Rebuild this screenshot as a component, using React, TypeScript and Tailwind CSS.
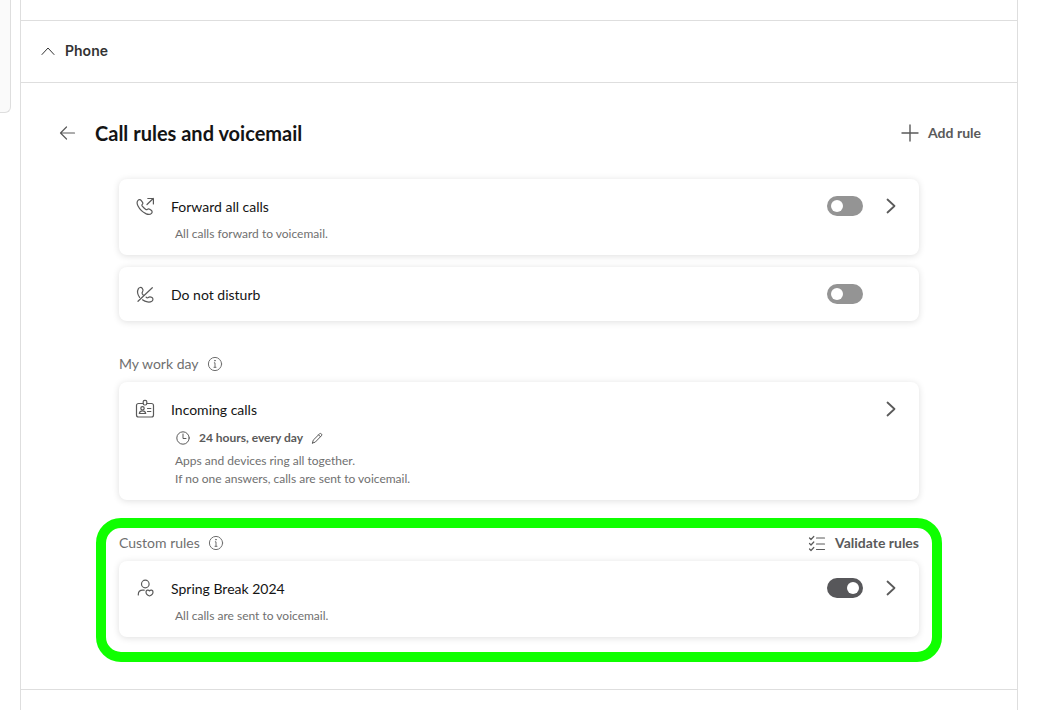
import { useState, type ReactNode } from 'react';

const HANDSET =
  'M3.2 4.2C2 5.4 1.8 7.6 2.9 9.8c1.6 3.2 4.6 6.2 7.9 7.8 2.2 1 4.5.9 5.7-.3.9-.9.8-2.2-.3-3l-1.5-1.1c-.8-.6-1.7-.5-2.3.1-.5.5-1.2.5-1.9 0A15 15 0 0 1 7.3 10.2c-.5-.7-.5-1.3 0-1.8.6-.6.7-1.5.1-2.3L6.3 4.6C5.4 3.4 4 3.3 3.2 4.2Z';

function Icon({ size = 20, stroke = 1.2, children }: { size?: number; stroke?: number; children: ReactNode }) {
  return (
    <svg
      width={size}
      height={size}
      viewBox={`0 0 ${size} ${size}`}
      fill="none"
      stroke="currentColor"
      strokeWidth={stroke}
      strokeLinecap="round"
      strokeLinejoin="round"
      className="shrink-0"
      aria-hidden="true"
    >
      {children}
    </svg>
  );
}

function ForwardIcon() {
  return (
    <Icon>
      <path d={HANDSET} />
      <path d="M12 8.500 18.200 2.500M12.800 2.500h5.600V8" />
    </Icon>
  );
}

function DisturbIcon() {
  return (
    <Icon>
      <path d="M4.600 13.400C2.600 10.600 2.200 7 3.300 4.900 4.200 3.200 6.200 3 7.300 4.300c1 1.200 1 2.500.2 3.600-.5.7-.6 1.300-.2 2l1 1.300" />
      <path d="M7.500 15.800c3 2.400 7.300 2.800 9.300 1.500 1.400-1 1.500-2.700.2-3.700-1.300-.9-2.700-.9-3.700-.1-.8.6-1.500.4-2.200-.3" />
      <path d="M17.300 3.700 3 17.300" />
    </Icon>
  );
}

function BadgeIcon() {
  return (
    <Icon>
      <path d="M8 4.500H3.500a2 2 0 0 0-2 2V16a2 2 0 0 0 2 2h13a2 2 0 0 0 2-2V6.500a2 2 0 0 0-2-2H12" />
      <rect x="8.200" y="1.300" width="3.600" height="4.700" rx="1.500" />
      <circle cx="7.500" cy="9.300" r="1.700" />
      <path d="M4.300 14.500c.3-1.800 1.500-2.600 3.200-2.600s2.900.8 3.200 2.600ZM12.500 9.500h3.300M12.500 12.500h3.300" />
    </Icon>
  );
}

function PersonHeartIcon() {
  return (
    <Icon>
      <circle cx="10.300" cy="6" r="3.800" />
      <path d="M3.300 17v-.5c0-2.700 1.900-4.300 4.400-4.300h1.500" />
      <path d="M14.500 18c-2.300-.6-3.500-2-3.500-3.900 0-2.300 2.500-2.600 3.500-1.200 1-1.400 3.500-1.100 3.500 1.200 0 1.900-1.200 3.300-3.500 3.900Z" />
    </Icon>
  );
}

function InfoIcon() {
  return (
    <Icon size={16} stroke={1}>
      <circle cx="8" cy="8" r="6.600" />
      <path d="M7.300 6.800H8v4.500M7 11.300h2" />
      <circle cx="7.900" cy="4.700" r=".3" fill="currentColor" />
    </Icon>
  );
}

function Chevron({ label }: { label: string }) {
  return (
    <button type="button" aria-label={label} className="flex size-6 items-center justify-center text-[#5a5a5a]">
      <Icon stroke={1.8}>
        <path d="m6.500 3.500 7 6.500-7 6.500" />
      </Icon>
    </button>
  );
}

function Toggle({ label, defaultOn = false }: { label: string; defaultOn?: boolean }) {
  const [on, setOn] = useState(defaultOn);
  return (
    <input
      type="checkbox"
      role="switch"
      aria-label={label}
      checked={on}
      onChange={(e) => setOn(e.target.checked)}
      className="flex h-5 w-9 shrink-0 cursor-pointer appearance-none items-center rounded-full bg-[#949494] px-1 before:size-3 before:rounded-full before:bg-white checked:justify-end checked:bg-[#57575a]"
    />
  );
}

interface RuleCardProps {
  icon: ReactNode;
  title: string;
  toggle?: boolean;
  on?: boolean;
  link?: boolean;
  children?: ReactNode;
}

function RuleCard({ icon, title, toggle, on, link, children }: RuleCardProps) {
  return (
    <article className="rounded-lg bg-white px-4 pt-4 pb-3 shadow-[0_1px_7px_rgba(0,0,0,0.13)]">
      <div className="mb-1 flex h-[22px] items-center gap-4">
        <span className="text-[#5a5a5a]">{icon}</span>
        <h3 className="flex-1 pt-0.5 text-sm text-[#141414]">{title}</h3>
        {toggle && <Toggle label={title} defaultOn={on} />}
        {link ? <Chevron label={`Open ${title}`} /> : <span className="w-6" />}
      </div>
      {children && <div className="mt-2 pl-10 text-xs leading-[18px] text-[#707070]">{children}</div>}
    </article>
  );
}

function SectionLabel({ children }: { children: string }) {
  return (
    <div className="flex items-center gap-2 text-[#6f6f6f]">
      <h2 className="text-sm">{children}</h2>
      <button type="button" aria-label={`About ${children}`}>
        <InfoIcon />
      </button>
    </div>
  );
}

export default function App() {
  return (
    <div className="flex min-h-screen items-start gap-[9px] bg-white pr-5 font-[Lato,sans-serif]">
      <aside className="h-[113px] w-[11px] shrink-0 rounded-br-md border-r border-b border-[#dedede] bg-[#fafafa]" />

      <main className="min-h-screen flex-1 border-x border-[#dedede] pt-5">
        <div className="border-y border-[#dedede]">
          <button type="button" className="flex h-[61px] w-full items-center gap-2 px-[18px] pb-0.5 text-[#333]">
            <Icon size={18} stroke={1}>
              <path d="m3 12.500 6-6.500 6 6.500" />
            </Icon>
            <span className="font-[Inter,sans-serif] text-sm font-semibold">Phone</span>
          </button>
        </div>

        <section className="border-b border-[#dedede] pt-9 pb-[27px]">
          <header className="mb-8 flex h-7 items-center justify-between px-9">
            <div className="flex items-center gap-[18px]">
              <button type="button" aria-label="Back" className="text-[#5a5a5a]">
                <Icon stroke={1.2}>
                  <path d="M17.500 10h-14M9.500 4 3.500 10l6 6" />
                </Icon>
              </button>
              <h1 className="text-xl font-bold text-[#141414]">Call rules and voicemail</h1>
            </div>
            <button type="button" className="flex items-center gap-2 text-sm font-bold text-[#5a5a5a]">
              <Icon stroke={1.4}>
                <path d="M10 2v16M2 10h16" />
              </Icon>
              Add rule
            </button>
          </header>

          <div className="mx-auto max-w-[800px]">
            <div className="flex flex-col gap-3">
              <RuleCard icon={<ForwardIcon />} title="Forward all calls" toggle link>
                <p>All calls forward to voicemail.</p>
              </RuleCard>
              <RuleCard icon={<DisturbIcon />} title="Do not disturb" toggle />
            </div>

            <div className="mt-[33px] mb-[18px] flex flex-col gap-2">
              <SectionLabel>My work day</SectionLabel>
              <RuleCard icon={<BadgeIcon />} title="Incoming calls" link>
                <div className="mb-1 flex h-5 items-center gap-2 text-[#5a5a5a]">
                  <Icon size={16} stroke={1}>
                    <circle cx="8" cy="8" r="6.200" />
                    <path d="M8 4v4.500h3" />
                  </Icon>
                  <span className="font-bold">24 hours, every day</span>
                  <button type="button" aria-label="Edit hours">
                    <Icon size={12} stroke={1}>
                      <path d="m1.500 11 .7-2.800 6.300-6.300a1.300 1.300 0 0 1 1.900 1.900L4.200 10.200 1.500 11ZM7.600 2.900l1.800 1.800" />
                    </Icon>
                  </button>
                </div>
                <p>Apps and devices ring all together.</p>
                <p>If no one answers, calls are sent to voicemail.</p>
              </RuleCard>
            </div>

            {/* Highlighted rules */}
            <div className="-mx-[23px] flex flex-col gap-2 rounded-[25px] border-[10px] border-[#0fff00] px-[13px] pt-[5px] pb-[15px]">
              <div className="flex h-5 items-center justify-between">
                <SectionLabel>Custom rules</SectionLabel>
                <button type="button" className="flex items-center gap-2 text-sm font-bold text-[#5a5a5a]">
                  <Icon stroke={1.2}>
                    <path d="M9.500 5h8M9.500 11h8M9.500 16.500h8M2.500 5 4 6.500l2.800-3M2.500 10.500 4 12l2.800-3M2.500 16 4 17.500l2.800-3" />
                  </Icon>
                  Validate rules
                </button>
              </div>
              <RuleCard icon={<PersonHeartIcon />} title="Spring Break 2024" toggle on link>
                <p>All calls are sent to voicemail.</p>
              </RuleCard>
            </div>
          </div>
        </section>
      </main>
    </div>
  );
}
